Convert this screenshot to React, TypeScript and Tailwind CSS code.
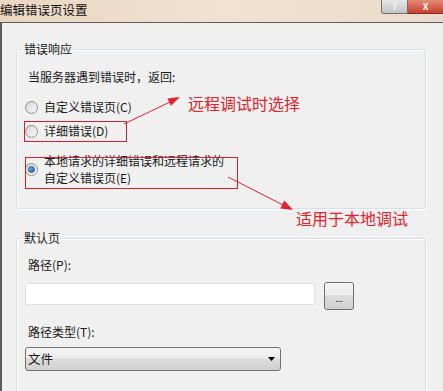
import React from 'react';

const Radio = ({ checked }: { checked?: boolean }) => (
    <span className="flex h-[13px] w-[13px] shrink-0 items-center justify-center rounded-full border border-[#8f8f8f] bg-gradient-to-br from-[#d4d4d4] to-[#fbfbfb]">
        {checked && (
            <span className="h-[7px] w-[7px] rounded-full border border-[#1d5287] bg-gradient-to-br from-[#7cc1f2] to-[#1a5fa8]" />
        )}
    </span>
);

export default function App() {
    return (
        <div
            className="relative h-[391px] w-[443px] overflow-hidden bg-[#f0f0f0] text-[12px] text-[#1a1a1a]"
            style={{ fontFamily: '"Noto Sans CJK SC", "Liberation Sans", sans-serif' }}
        >
            {/* Title bar */}
            <div className="flex h-[22px] items-start justify-between bg-gradient-to-r from-[#ead6c2] via-[#f1e2d2] to-[#eadbcb]">
                <span className="text-[12.5px] leading-[20px] text-[#111]">编辑错误页设置</span>
                <div className="flex">
                    <div className="flex h-[14px] w-[27px] items-center justify-center rounded-bl-[3px] border border-t-0 border-[#6f6f6f] bg-gradient-to-b from-[#e6e6e6] to-[#c4c4c4] text-[9px] font-bold leading-[12px] text-[#f7f7f7]">
                        ?
                    </div>
                    <div className="flex h-[14px] w-[35px] items-center justify-center border-b border-[#8a2a20] bg-gradient-to-b from-[#e48a78] to-[#c6402f] text-[9px] font-bold leading-[12px] text-white">
                        X
                    </div>
                </div>
            </div>

            {/* Body */}
            <div className="h-full border-t border-l-2 border-[#5c5c5c] pt-[18px] pl-[14px] pr-[17px]">
                <fieldset className="rounded-[3px] border border-[#d5dfe5] pl-[8px] pt-[12px] pb-[22px] shadow-[inset_1px_1px_0_#fff,1px_1px_0_#fff]">
                    <legend className="ml-[-2px] px-[1px] leading-[16px]">错误响应</legend>
                    <p className="ml-[3px] leading-[16px]">当服务器遇到错误时，返回:</p>
                    <div className="mt-[14px] flex items-center gap-[6px] leading-[16px]">
                        <Radio />
                        <span>自定义错误页(C)</span>
                    </div>
                    <div className="mt-[8px] flex items-center gap-[6px] leading-[16px]">
                        <Radio />
                        <span>详细错误(D)</span>
                    </div>
                    <div className="mt-[13px] flex items-center gap-[6px] leading-[17px]">
                        <Radio checked />
                        <span>
                            本地请求的详细错误和远程请求的
                            <br />
                            自定义错误页(E)
                        </span>
                    </div>
                </fieldset>

                <fieldset className="mt-[21px] h-[200px] rounded-[3px] border border-[#d5dfe5] pl-[8px] pt-[11px] shadow-[inset_1px_1px_0_#fff,1px_1px_0_#fff]">
                    <legend className="ml-[-2px] px-[1px] leading-[16px]">默认页</legend>
                    <p className="ml-[3px] leading-[16px]">路径(P):</p>
                    <div className="mt-[9px] flex items-start gap-[9px]">
                        <div className="mt-[1px] h-[22px] w-[290px] rounded-[2px] border border-[#dde0e6] bg-white" />
                        <button className="flex h-[28px] w-[30px] items-end justify-center rounded-[3px] border border-[#707070] bg-[linear-gradient(#f4f4f4_0%,#ececec_45%,#dcdcdc_50%,#d0d0d0_100%)] pb-[6px] text-[9px] leading-none">
                            ...
                        </button>
                    </div>
                    <p className="mt-[14px] ml-[3px] leading-[16px]">路径类型(T):</p>
                    <div className="mt-[7px] flex h-[24px] w-[256px] items-center justify-between rounded-[3px] border border-[#707070] bg-[linear-gradient(#f4f4f4_0%,#ececec_45%,#dcdcdc_50%,#d0d0d0_100%)] pl-[2px] pr-[5px]">
                        <span className="text-[12.5px]">文件</span>
                        <svg width="7" height="4" viewBox="0 0 7 4">
                            <path d="M0 0h7L3.5 4z" fill="#000" />
                        </svg>
                    </div>
                </fieldset>
            </div>

            {/* Annotations */}
            <div className="absolute left-[24px] top-[121px] h-[21px] w-[103px] border border-[#d4202a]" />
            <div className="absolute left-[25px] top-[157px] h-[32px] w-[213px] border border-[#d4202a]" />
            <svg className="pointer-events-none absolute inset-0" width="443" height="391">
                <line x1="124" y1="124" x2="172" y2="101" stroke="#e3222b" strokeWidth="1" />
                <polygon points="180,97 170.9,105.8 167.5,98.6" fill="#e3222b" />
                <line x1="228" y1="177" x2="285" y2="206" stroke="#e3222b" strokeWidth="1" />
                <polygon points="293,210 280.3,208.6 284.3,200.6" fill="#e3222b" />
            </svg>
            <span className="absolute left-[188px] top-[93px] text-[16px] leading-[20px] text-[#e3222b]">远程调试时选择</span>
            <span className="absolute left-[296px] top-[208px] text-[16px] leading-[20px] text-[#e3222b]">适用于本地调试</span>
        </div>
    );
}
